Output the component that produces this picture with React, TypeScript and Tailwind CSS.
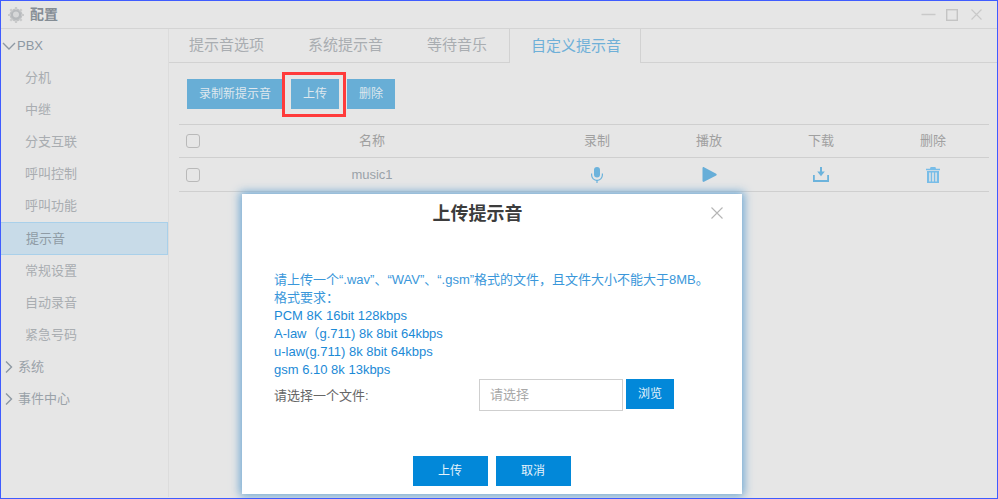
import React from "react";

const font = "font-['Liberation_Sans','Noto_Sans_CJK_SC',sans-serif]";

const menu = ["分机", "中继", "分支互联", "呼叫控制", "呼叫功能", "提示音", "常规设置", "自动录音", "紧急号码"];
const tabs = ["提示音选项", "系统提示音", "等待音乐"];

const Chevron = ({ open }: { open?: boolean }) => (
  <svg width="14" height="14" viewBox="0 0 14 14" fill="none" stroke="#8d98a3" strokeWidth="1.4">
    {open ? <path d="M1 4l6 6 6-6" /> : <path d="M4 1.5l5.5 5.5L4 12.5" />}
  </svg>
);

const Checkbox = () => <span className="block w-[14px] h-[14px] rounded-[3px] border border-[#b9b9b9]" />;

const MicIcon = () => (
  <svg width="12" height="16" viewBox="0 0 12 16" fill="#6cb3dc">
    <rect x="3" y="0" width="6" height="10.5" rx="3" />
    <path d="M0 6.5h1.2V8a4.8 4.8 0 0 0 9.6 0V6.5H12V8a6 6 0 0 1-5.4 5.9V16H5.4v-2.1A6 6 0 0 1 0 8z" />
  </svg>
);

const PlayIcon = () => (
  <svg width="15" height="15" viewBox="0 0 15 15" fill="#67aed8">
    <path d="M0.5 1.2C0.5 0.3 1.3-0.2 2 0.2L14.2 6.7c.7.4.7 1.3 0 1.7L2 14.8c-.7.4-1.5-.1-1.5-1z" />
  </svg>
);

const DownloadIcon = () => (
  <svg width="16" height="15" viewBox="0 0 16 15" fill="#6cb3dc">
    <path d="M7 0h2v4.6h2.8L8 9.2 4.2 4.6H7z" />
    <path d="M0 8h1.8v5h12.4V8H16v7H0z" />
  </svg>
);

const TrashIcon = () => (
  <svg width="14" height="16" viewBox="0 0 14 16" fill="#78bde8">
    <path d="M4.6 0h4.8l.6 1.8H14V3.2H0V1.8h4z" />
    <path d="M1 4h12v12H1zM3.2 5.6v8.8h1.5V5.6zM6.2 5.6v8.8h1.6V5.6zM9.3 5.6v8.8h1.5V5.6z" fillRule="evenodd" />
  </svg>
);

const GearIcon = () => (
  <svg width="16" height="16" viewBox="0 0 16 16">
    <circle cx="8" cy="8" r="6.4" fill="#bfc1c3" />
    <path d="M8 0v16M0 8h16M2.3 2.3l11.4 11.4M13.7 2.3L2.3 13.7" stroke="#c9cacb" strokeWidth="2.2" />
    <circle cx="8" cy="8" r="5" fill="#b6b9bc" />
    <circle cx="8" cy="7.4" r="3" fill="#d6d7d8" />
  </svg>
);

const Row = ({ name, cells, text, height }: { name: string; cells: React.ReactNode[]; text: string; height: string }) => (
  <div className={`flex items-center border-b border-[#cfcfcf] text-[13px] ${height} ${text}`}>
    <div className="w-[24px] pl-[7px] shrink-0">
      <Checkbox />
    </div>
    <div className="flex-1 text-center">{name}</div>
    {cells.map((c, i) => (
      <div key={i} className="w-[112px] shrink-0 flex justify-center items-center">
        {c}
      </div>
    ))}
  </div>
);

export default function App() {
  return (
    <div className={`relative w-[998px] h-[499px] overflow-hidden bg-[#e6e6e6] border border-[#3f5cff] ${font}`}>
      {/* 标题栏 */}
      <div className="flex items-center h-[28px] pl-[7px] pr-[15px] border-b border-[#d4d4d4]">
        <GearIcon />
        <span className="ml-[6px] text-[14px] font-bold text-[#858d95]">配置</span>
        <div className="ml-auto flex items-center">
          <svg width="15" height="12" viewBox="0 0 15 12" stroke="#c9c9c9" strokeWidth="1.5">
            <path d="M0.5 5.5h14" />
          </svg>
          <svg className="ml-[10px]" width="12" height="12" viewBox="0 0 12 12" fill="none" stroke="#c4c4c4" strokeWidth="1.4">
            <rect x="0.7" y="0.7" width="10.6" height="10.6" />
          </svg>
          <svg className="ml-[13px]" width="11" height="11" viewBox="0 0 11 11" fill="none" stroke="#c9c9c9" strokeWidth="1.2">
            <path d="M0.5 0.5l10 10M10.5 0.5l-10 10" />
          </svg>
        </div>
      </div>

      <div className="flex h-[468px]">
        {/* 左侧菜单 */}
        <aside className="w-[168px] shrink-0 pt-[1px] border-r border-[#dcdcdc] text-[13px] text-[#a9adb1]">
          <div className="flex items-center h-[32px] pl-[1px] text-[#8d98a3]">
            <Chevron open />
            <span className="ml-[1px]">PBX</span>
          </div>
          {menu.map((m) => (
            <div
              key={m}
              className={
                m === "提示音"
                  ? "flex items-center h-[33px] pl-[25px] bg-[#c8dbe8] border-y border-r border-[#a9d0ea] text-[#8f9ba5]"
                  : "flex items-center h-[32px] pl-[24px]"
              }
            >
              {m}
            </div>
          ))}
          {["系统", "事件中心"].map((m) => (
            <div key={m} className="flex items-center h-[32px] pl-[1px] text-[#9aa2a9]">
              <Chevron />
              <span className="ml-[2px]">{m}</span>
            </div>
          ))}
        </aside>

        <main className="flex-1 min-w-0">
          {/* 标签页 */}
          <div className="flex h-[34px] border-b border-[#d2d2d2] text-[15px] text-[#a9adb1]">
            {tabs.map((t) => (
              <div key={t} className="flex items-center px-[22px] first:pl-[20px] last:pr-[25px]">
                {t}
              </div>
            ))}
            <div className="flex items-center h-[34px] pl-[21px] pr-[19px] border-x border-[#d2d2d2] bg-[#e6e6e6] text-[#6fb0d8]">
              自定义提示音
            </div>
          </div>

          {/* 工具栏 */}
          <div className="flex gap-[8px] pl-[18px] pt-[16px] pb-[15px] text-[12px] text-[#dfe8ee]">
            <div className="flex items-center justify-center w-[96px] h-[30px] bg-[#68aed6]">录制新提示音</div>
            <div className="flex items-center justify-center w-[48px] h-[30px] bg-[#68aed6]">上传</div>
            <div className="flex items-center justify-center w-[48px] h-[30px] bg-[#68aed6]">删除</div>
          </div>

          {/* 列表 */}
          <div className="ml-[10px] mr-[8px] border-t border-[#cfcfcf]">
            <Row name="名称" height="h-[33px]" text="text-[#a0a0a0]" cells={["录制", "播放", "下载", "删除"]} />
            <Row name="music1" height="h-[34px]" text="text-[#9aa2a9]" cells={[<MicIcon />, <PlayIcon />, <DownloadIcon />, <TrashIcon />]} />
          </div>
        </main>
      </div>

      {/* 红色标注框 */}
      <div className="absolute left-[281px] top-[71px] w-[64px] h-[45px] border-[3px] border-[#ff3b3b]" />

      {/* 上传弹窗 */}
      <div className="absolute left-[241px] top-[193px] w-[500px] h-[300px] bg-white shadow-[0_0_9px_2px_#6ba6d3] flex flex-col">
        <div className="relative h-[40px] flex items-center justify-center pr-[29px] text-[18px] font-bold text-[#3c3c3c]">
          上传提示音
          <svg className="absolute right-[19px] top-[13px]" width="12" height="12" viewBox="0 0 12 12" fill="none" stroke="#b5b5b5" strokeWidth="1.1">
            <path d="M0.5 0.5l11 11M11.5 0.5l-11 11" />
          </svg>
        </div>
        <div className="pl-[32px] pt-[37px] text-[13px] leading-[18px] text-[#1c8ad6]">
          <p className="text-[#3a97da]">请上传一个“.wav”、“WAV”、“.gsm”格式的文件，且文件大小不能大于8MB。</p>
          <p className="text-[#3a97da]">格式要求：</p>
          <p>PCM 8K 16bit 128kbps</p>
          <p>A-law（g.711) 8k 8bit 64kbps</p>
          <p>u-law(g.711) 8k 8bit 64kbps</p>
          <p>gsm 6.10 8k 13kbps</p>
        </div>
        <div className="flex items-start pl-[32px]">
          <span className="w-[205px] pt-[8px] text-[13px] leading-[18px] text-[#666]">请选择一个文件:</span>
          <div className="flex items-center w-[144px] h-[32px] pl-[10px] border border-[#cfcfcf] text-[13px] text-[#a8a8a8]">请选择</div>
          <div className="flex items-center justify-center w-[48px] h-[30px] ml-[3px] bg-[#0288d9] text-[12px] text-[#e6f3fb]">浏览</div>
        </div>
        <div className="flex justify-center gap-[8px] mt-[45px] pr-[1px] text-[12px] text-[#e6f3fb]">
          <div className="flex items-center justify-center w-[75px] h-[30px] bg-[#0288d9]">上传</div>
          <div className="flex items-center justify-center w-[75px] h-[30px] bg-[#0288d9]">取消</div>
        </div>
      </div>
    </div>
  );
}
